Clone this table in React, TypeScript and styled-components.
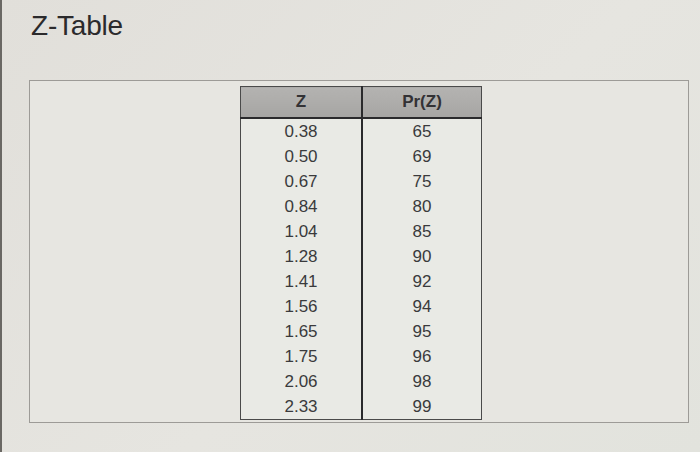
import React from 'react'
import styled, {createGlobalStyle} from 'styled-components'

const GlobalStyle = createGlobalStyle`
  html, body {
    margin: 0;
    padding: 0;
    background: #e3e1dc;
  }
  body {
    font-family: 'Liberation Sans', Arial, sans-serif;
  }
`

const Page = styled.div`
  width: 700px;
  height: 452px;
  box-sizing: border-box;
  border-left: 2px solid #6a6864;
  padding: 10px 0 0 27px;
  background: linear-gradient(135deg, #e1dfda 0%, #e6e5e0 55%, #e2e3dd 100%);
  overflow: hidden;
`

const Title = styled.h1`
  margin: 0;
  font-weight: 400;
  font-size: 28px;
  line-height: 32px;
  color: #2b2a2c;
  letter-spacing: -0.2px;
  padding-left: 2px;
`

const Frame = styled.div`
  margin-top: 38px;
  width: 660px;
  height: 343px;
  box-sizing: border-box;
  border: 1px solid #9d9b97;
  background: #e7e6e1;
  display: flex;
  justify-content: flex-start;
  padding: 5px 0 0 210px;
`

const Table = styled.table`
  border-collapse: collapse;
  width: 242px;
  height: 332px;
  border: 1px solid #4a4a4a;
  background: #e9eae5;
  font-size: 17px;
  color: #3a3a3c;
`

const HeadCell = styled.th<{first?: boolean}>`
  height: 30px;
  padding: 0;
  background: linear-gradient(180deg, #b4b3b1 0%, #a6a5a3 100%);
  color: #333235;
  font-weight: 700;
  font-size: 17px;
  border-bottom: 2px solid #2a2a2c;
  border-right: ${p => (p.first ? '2px solid #2a2a2c' : 'none')};
  width: ${p => (p.first ? '120px' : 'auto')};
`

const Cell = styled.td<{first?: boolean}>`
  height: 25px;
  padding: 0;
  text-align: center;
  border-right: ${p => (p.first ? '2px solid #2a2a2c' : 'none')};
`

const rows: [string, string][] = [
  ['0.38', '65'],
  ['0.50', '69'],
  ['0.67', '75'],
  ['0.84', '80'],
  ['1.04', '85'],
  ['1.28', '90'],
  ['1.41', '92'],
  ['1.56', '94'],
  ['1.65', '95'],
  ['1.75', '96'],
  ['2.06', '98'],
  ['2.33', '99'],
]

const App = () => {
  return (
    <>
      <GlobalStyle />
      <Page>
        <Title>Z-Table</Title>
        <Frame>
          <Table>
            <thead>
              <tr>
                <HeadCell first>Z</HeadCell>
                <HeadCell>Pr(Z)</HeadCell>
              </tr>
            </thead>
            <tbody>
              {rows.map(([z, pr]) => (
                <tr key={z}>
                  <Cell first>{z}</Cell>
                  <Cell>{pr}</Cell>
                </tr>
              ))}
            </tbody>
          </Table>
        </Frame>
      </Page>
    </>
  )
}

export default App
